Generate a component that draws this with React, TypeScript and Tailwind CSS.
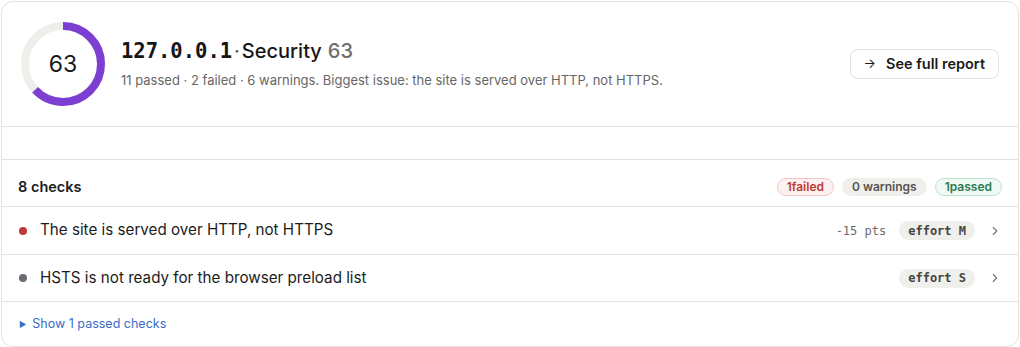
import React from "react";

const sans = { fontFamily: "Inter, 'Noto Sans', sans-serif" };
const mono = { fontFamily: "'DejaVu Sans Mono', monospace" };

function Ring() {
  const r = 38;
  const c = 2 * Math.PI * r;
  const pct = 0.63;
  return (
    <div className="relative w-[84px] h-[84px] shrink-0">
      <svg width="84" height="84" viewBox="0 0 84 84">
        <circle cx="42" cy="42" r={r} fill="none" stroke="#eeeeeb" strokeWidth="8" />
        <circle
          cx="42"
          cy="42"
          r={r}
          fill="none"
          stroke="#7c3fd1"
          strokeWidth="8"
          strokeDasharray={`${c * pct} ${c}`}
          transform="rotate(-90 42 42)"
        />
      </svg>
      <div className="absolute inset-0 flex items-center justify-center text-[23px] text-[#1a1a1a]">63</div>
    </div>
  );
}

function Chevron() {
  return (
    <svg width="14" height="14" viewBox="0 0 24 24" fill="none" stroke="#777" strokeWidth="2" strokeLinecap="round" strokeLinejoin="round">
      <path d="M9 6l6 6-6 6" />
    </svg>
  );
}

export default function App() {
  return (
    <div className="bg-white w-[1020px] h-[347px] p-px" style={sans}>
      <div className="border border-[#e4e2de] rounded-[12px] bg-white overflow-hidden w-[1018px]">
        <div className="h-[125px] flex items-center pl-[19px] pr-[19px] border-b border-[#e4e2de]">
          <Ring />
          <div className="ml-4 flex-1 mt-[1px]">
            <div className="flex items-baseline text-[20px] leading-[26px] text-[#161616]">
              <span className="font-bold text-[20.5px]" style={mono}>127.0.0.1</span>
              <span className="mx-[2px] text-[#555]">·</span>
              <span className="font-medium">Security</span>
              <span className="ml-[6px] font-medium text-[#6e6e6e]">63</span>
            </div>
            <div className="mt-[7px] text-[13px] text-[#666]">
              11 passed · 2 failed · 6 warnings. Biggest issue: the site is served over HTTP, not HTTPS.
            </div>
          </div>
          <button className="h-[30px] px-[13px] flex items-center gap-[10px] rounded-[8px] border border-[#e2e2e2] bg-white text-[14.5px] font-semibold text-[#1a1a1a]">
            <span className="text-[13px] font-normal">→</span>
            <span>See full report</span>
          </button>
        </div>
        <div className="h-[33px] border-b border-[#e4e2de]" />
        <div className="h-[47px] flex items-center justify-between pl-4 pr-4 pt-[8px] border-b border-[#e4e2de]">
          <div className="text-[14.5px] font-semibold text-[#1a1a1a]">8 checks</div>
          <div className="flex items-center gap-2 text-[12px] font-semibold">
            <span className="px-[9px] h-[18px] flex items-center rounded-full border border-[#f2c6c6] bg-[#fdf0f0] text-[#c0392f]">1failed</span>
            <span className="px-[9px] h-[18px] flex items-center rounded-full border border-[#efefec] bg-[#efefec] text-[#555]">0 warnings</span>
            <span className="px-[9px] h-[18px] flex items-center rounded-full border border-[#bfe3cf] bg-[#effaf4] text-[#2b7a52]">1passed</span>
          </div>
        </div>
        <div className="h-[48px] flex items-center pl-[17px] pr-[16px] border-b border-[#e4e2de]">
          <span className="w-[8px] h-[8px] rounded-full bg-[#c0363a]" />
          <span className="ml-[13px] text-[15.2px] text-[#1c1c1c] flex-1">The site is served over HTTP, not HTTPS</span>
          <span className="text-[12px] text-[#6a6a6a] mr-[13px]" style={mono}>-15 pts</span>
          <span className="h-[19px] px-[9px] flex items-center rounded-full bg-[#efefeb] text-[12px] font-bold text-[#444]" style={mono}>effort M</span>
          <span className="ml-[13px]"><Chevron /></span>
        </div>
        <div className="h-[47px] flex items-center pl-[17px] pr-[16px] border-b border-[#e4e2de]">
          <span className="w-[8px] h-[8px] rounded-full bg-[#6b6b73]" />
          <span className="ml-[13px] text-[15.2px] text-[#1c1c1c] flex-1">HSTS is not ready for the browser preload list</span>
          <span className="h-[19px] px-[9px] flex items-center rounded-full bg-[#efefeb] text-[12px] font-bold text-[#444]" style={mono}>effort S</span>
          <span className="ml-[13px]"><Chevron /></span>
        </div>
        <div className="h-[44px] flex items-center pl-[17px] text-[12.5px] text-[#3a6cc6]">
          <span className="text-[8px] mr-[6px]">▶</span>
          <span>Show 1 passed checks</span>
        </div>
      </div>
    </div>
  );
}
